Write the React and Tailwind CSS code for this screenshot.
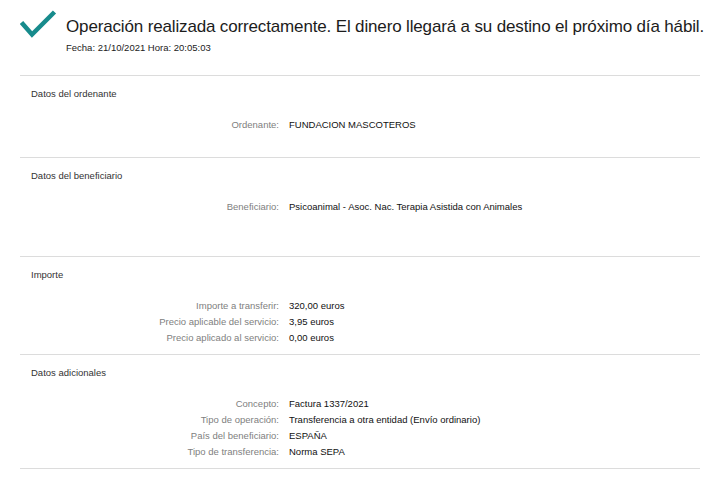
import React from 'react';

const font = { fontFamily: '"Liberation Sans", Arial, sans-serif' };

const sections = [
  {
    title: 'Datos del ordenante',
    pb: 'pb-[24px]',
    rows: [['Ordenante:', 'FUNDACION MASCOTEROS']],
  },
  {
    title: 'Datos del beneficiario',
    pb: 'pb-[41px]',
    rows: [['Beneficiario:', 'Psicoanimal - Asoc. Nac. Terapia Asistida con Animales']],
  },
  {
    title: 'Importe',
    pb: 'pb-[8px]',
    rows: [
      ['Importe a transferir:', '320,00 euros'],
      ['Precio aplicable del servicio:', '3,95 euros'],
      ['Precio aplicado al servicio:', '0,00 euros'],
    ],
  },
  {
    title: 'Datos adicionales',
    pb: 'pb-[8px]',
    rows: [
      ['Concepto:', 'Factura 1337/2021'],
      ['Tipo de operación:', 'Transferencia a otra entidad (Envío ordinario)'],
      ['País del beneficiario:', 'ESPAÑA'],
      ['Tipo de transferencia:', 'Norma SEPA'],
    ],
  },
];

const App = () => {
  return (
    <div className="w-[720px] h-[480px] bg-white overflow-hidden text-[#222]" style={font}>
      <div className="flex items-start pl-[20px] pt-[10px] h-[75px]">
        <svg width="37" height="28" viewBox="0 0 37 28" className="shrink-0">
          <path d="M1.5 12.5 L12 24.5 L34.5 2" fill="none" stroke="#178b8c" strokeWidth="4.5" strokeLinecap="butt" strokeLinejoin="miter" />
        </svg>
        <div className="ml-[9px] mt-[6px]">
          <div className="text-[17px] leading-[22px] tracking-[-0.15px] text-[#1c1c1c]">
            Operación realizada correctamente. El dinero llegará a su destino el próximo día hábil.
          </div>
          <div className="text-[9.5px] leading-[14px] mt-[3px] text-[#222]">Fecha: 21/10/2021 Hora: 20:05:03</div>
        </div>
      </div>

      <div className="mx-[20px]">
        {sections.map((s, i) => (
          <div key={i} className={`border-t border-[#dcdcdc] pt-[12px] ${s.pb}`}>
            <div className="pl-[11px] text-[9.5px] leading-[12px] text-[#333]">{s.title}</div>
            <div className="mt-[17px]">
              {s.rows.map(([k, v], j) => (
                <div key={j} className="flex items-center h-[16px] text-[9.5px]">
                  <div className="w-[259px] text-right text-[#808080]">{k}</div>
                  <div className="ml-[10px] text-[#111]">{v}</div>
                </div>
              ))}
            </div>
          </div>
        ))}
        <div className="border-t border-[#dcdcdc]" />
      </div>
    </div>
  );
};

export default App;
